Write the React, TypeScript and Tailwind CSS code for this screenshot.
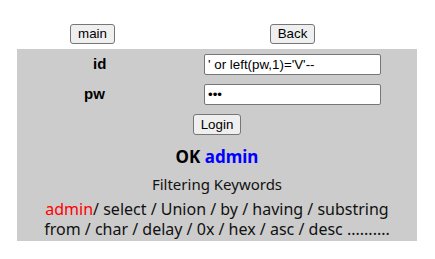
export default function App() {
  return (
    <div className="w-[435px] h-[259px] bg-white pt-[24px] font-['Liberation_Sans',Arial,sans-serif] text-black">
      {/* top nav buttons */}
      <div className="flex h-[20px] items-center">
        <button className="ml-[70px] h-[20px] w-[45px] rounded-[3px] border border-[#767676] bg-[#efefef] text-[13.33px] leading-none">
          main
        </button>
        <button className="ml-[155px] h-[20px] w-[45px] rounded-[3px] border border-[#767676] bg-[#efefef] text-[13.33px] leading-none">
          Back
        </button>
      </div>

      <div className="mt-[5px] ml-[17px] w-[400px] h-[192px] bg-[#cccccc] pt-[5px]">
        <div className="flex items-center h-[21px]">
          <span className="ml-[76px] w-[30px] text-[15px] font-bold">id</span>
          <input
            readOnly
            value="' or left(pw,1)='V'--"
            className="ml-[81px] h-[21px] w-[177px] rounded-[2px] border border-[#767676] bg-white px-[3px] text-[13.33px] outline-none"
          />
        </div>
        <div className="flex items-center h-[21px] mt-[9px]">
          <span className="ml-[67px] w-[39px] text-[15px] font-bold">pw</span>
          <input
            readOnly
            type="password"
            value="abc"
            className="ml-[81px] h-[21px] w-[177px] rounded-[2px] border border-[#767676] bg-white px-[3px] text-[13.33px] outline-none"
          />
        </div>
        <div className="flex justify-center mt-[9px]">
          <button className="h-[21px] w-[48px] rounded-[3px] border border-[#767676] bg-[#efefef] text-[13.33px] leading-none">
            Login
          </button>
        </div>

        <div className="mt-[11px] text-center font-['Noto_Sans','Noto_Sans_CJK_KR',sans-serif] text-[17px] font-bold leading-[22px]">
          OK <span className="text-[#0000ff]">admin</span>
        </div>
        <div className="mt-[6px] text-center font-['Noto_Sans','Noto_Sans_CJK_KR',sans-serif] text-[15px] leading-[20px] text-[#111]">
          Filtering Keywords
        </div>
        <div className="mt-[5px] text-center font-['Noto_Sans','Noto_Sans_CJK_KR',sans-serif] text-[16px] leading-[20px] text-[#111]">
          <div>
            <span className="text-[#ff0000]">admin</span>/ select / Union / by / having / substring
          </div>
          <div>from / char / delay / 0x / hex / asc / desc ..........</div>
        </div>
      </div>
    </div>
  );
}
